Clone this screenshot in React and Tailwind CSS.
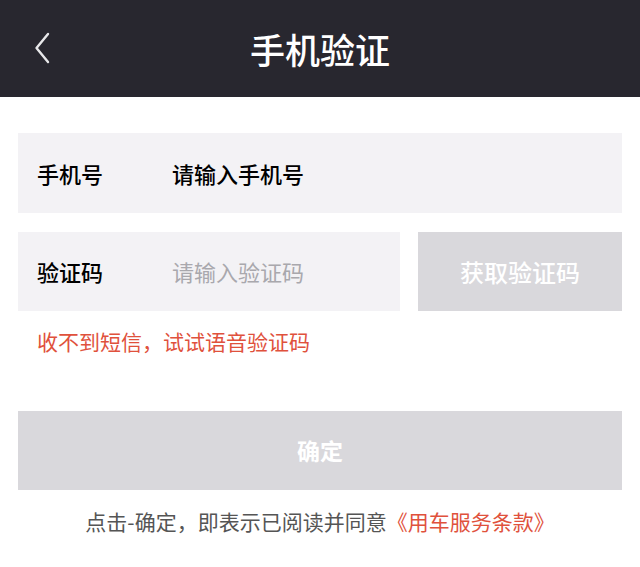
export default function App() {
  const font = { fontFamily: '"Noto Sans CJK SC", "Noto Sans", sans-serif' }
  return (
    <div className="w-[640px] h-[567px] bg-white" style={font}>
      <div className="relative h-[97px] bg-[#28272f] flex items-center justify-center">
        <svg className="absolute left-[34px] top-[32px]" width="16" height="32" viewBox="0 0 16 32" fill="none">
          <path d="M14 2 L2.5 16 L14 30" stroke="#e8e8ea" strokeWidth="2.4" strokeLinecap="round" strokeLinejoin="round" />
        </svg>
        <h1 className="text-[35px] leading-none text-white font-medium">手机验证</h1>
      </div>

      <div className="px-[18px] pt-[36px]">
        <div className="h-[80px] bg-[#f3f2f5] flex items-center px-[19px] text-[22px]">
          <span className="w-[135px] text-black font-medium">手机号</span>
          <span className="text-black font-medium">请输入手机号</span>
        </div>

        <div className="flex gap-[18px] mt-[19px]">
          <div className="flex-1 h-[79px] bg-[#f3f2f5] flex items-center px-[19px] text-[22px]">
            <span className="w-[135px] text-black font-medium">验证码</span>
            <span className="text-[#a9a8ad]">请输入验证码</span>
          </div>
          <button className="w-[204px] h-[79px] bg-[#d9d8dc] text-white text-[24px] font-medium">获取验证码</button>
        </div>

        <p className="mt-[20px] pl-[19px] text-[21px] text-[#e0513c] leading-none">收不到短信，试试语音验证码</p>

        <button className="w-full h-[79px] mt-[59px] bg-[#d9d8dc] text-white text-[23px] font-bold">确定</button>

        <p className="mt-[16px] text-center text-[21px] text-[#555555]">
          点击-确定，即表示已阅读并同意<span className="text-[#e0513c]">《用车服务条款》</span>
        </p>
      </div>
    </div>
  )
}
